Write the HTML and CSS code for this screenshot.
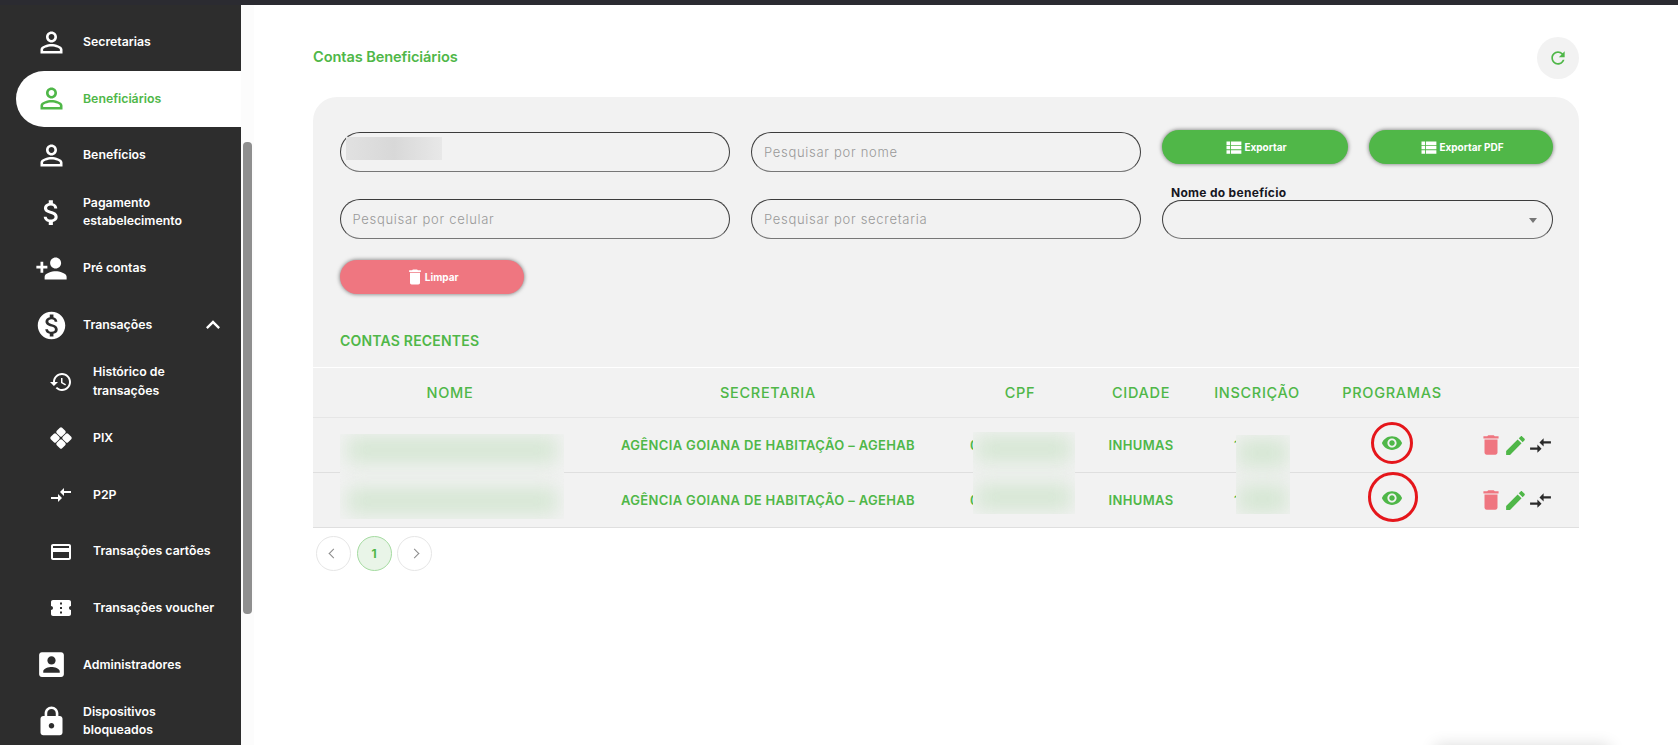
FILE: index.html
```html
<!DOCTYPE html>
<html lang="pt-BR">
<head>
<meta charset="utf-8">
<title>Contas Beneficiários</title>
<link rel="stylesheet" href="styles.css">
</head>
<body>
<svg class="defs" aria-hidden="true">
  <symbol id="i-person" viewBox="0 0 24 24"><path d="M12 5.9c1.16 0 2.1.94 2.1 2.1s-.94 2.1-2.1 2.1S9.9 9.16 9.9 8s.94-2.1 2.1-2.1m0 9c2.97 0 6.1 1.46 6.1 2.1v1.1H5.9V17c0-.64 3.13-2.1 6.1-2.1M12 4C9.79 4 8 5.79 8 8s1.79 4 4 4 4-1.79 4-4-1.79-4-4-4zm0 9c-2.67 0-8 1.34-8 4v3h16v-3c0-2.66-5.33-4-8-4z"/></symbol>
  <symbol id="i-money" viewBox="0 0 24 24"><path d="M11.8 10.9c-2.27-.59-3-1.2-3-2.15 0-1.09 1.01-1.85 2.7-1.85 1.78 0 2.44.85 2.5 2.1h2.21c-.07-1.72-1.12-3.3-3.21-3.81V3h-3v2.16c-1.94.42-3.5 1.68-3.5 3.61 0 2.31 1.91 3.46 4.7 4.13 2.5.6 3 1.48 3 2.41 0 .69-.49 1.79-2.7 1.79-2.06 0-2.87-.92-2.98-2.1h-2.2c.12 2.19 1.76 3.42 3.68 3.83V21h3v-2.15c1.95-.37 3.5-1.5 3.5-3.55 0-2.84-2.43-3.81-4.7-4.4z"/></symbol>
  <symbol id="i-add" viewBox="0 0 24 24"><path d="M15 12c2.21 0 4-1.79 4-4s-1.79-4-4-4-4 1.79-4 4 1.79 4 4 4zm-9-2V7H4v3H1v2h3v3h2v-3h3v-2H6zm9 4c-2.67 0-8 1.34-8 4v2h16v-2c0-2.66-5.33-4-8-4z"/></symbol>
  <symbol id="i-coin" viewBox="0 0 24 24"><path d="M12 2C6.48 2 2 6.48 2 12s4.48 10 10 10 10-4.48 10-10S17.52 2 12 2zm1.41 16.09V20h-2.67v-1.93c-1.71-.36-3.16-1.46-3.27-3.4h1.96c.1 1.05.82 1.87 2.65 1.87 1.96 0 2.4-.98 2.4-1.59 0-.83-.44-1.61-2.67-2.14-2.48-.6-4.18-1.62-4.18-3.67 0-1.72 1.39-2.84 3.11-3.21V4h2.67v1.95c1.86.45 2.79 1.86 2.85 3.39H14.3c-.05-1.11-.64-1.87-2.22-1.87-1.5 0-2.4.68-2.4 1.64 0 .84.65 1.39 2.67 1.91s4.18 1.39 4.18 3.91c-.01 1.83-1.38 2.83-3.12 3.16z"/></symbol>
  <symbol id="i-up" viewBox="0 0 24 24"><path d="M12 8l-6 6 1.41 1.41L12 10.83l4.59 4.58L18 14z"/></symbol>
  <symbol id="i-history" viewBox="0 0 24 24"><path d="M13 3c-4.97 0-9 4.03-9 9H1l3.89 3.89.07.14L9 12H6c0-3.87 3.13-7 7-7s7 3.13 7 7-3.13 7-7 7c-1.93 0-3.68-.79-4.94-2.06l-1.42 1.42C8.27 19.99 10.51 21 13 21c4.97 0 9-4.03 9-9s-4.03-9-9-9zm-1 5v5l4.28 2.54.72-1.21-3.5-2.08V8H12z"/></symbol>
  <symbol id="i-pix" viewBox="0 0 24 24"><rect x="8.2" y="2.2" width="7.6" height="7.6" rx="1.6" transform="rotate(45 12 6)"/><rect x="8.2" y="14.2" width="7.6" height="7.6" rx="1.6" transform="rotate(45 12 18)"/><rect x="2.2" y="8.2" width="7.6" height="7.6" rx="1.6" transform="rotate(45 6 12)"/><rect x="14.2" y="8.2" width="7.6" height="7.6" rx="1.6" transform="rotate(45 18 12)"/></symbol>
  <symbol id="i-swap" viewBox="0 0 24 24"><path d="M9.01 14H2v2h7.01v3L13 15l-3.99-4v3zm5.98-1v-3H22V8h-7.01V5L11 9l3.99 4z"/></symbol>
  <symbol id="i-card" viewBox="0 0 24 24"><path d="M20 4H4c-1.11 0-1.99.89-1.99 2L2 18c0 1.11.89 2 2 2h16c1.11 0 2-.89 2-2V6c0-1.11-.89-2-2-2zm0 14H4v-6h16v6zm0-10H4V6h16v2z"/></symbol>
  <symbol id="i-ticket" viewBox="0 0 24 24"><path d="M22 10V6c0-1.11-.9-2-2-2H4c-1.1 0-1.99.89-1.99 2v4c1.1 0 1.99.9 1.99 2s-.89 2-2 2v4c0 1.1.9 2 2 2h16c1.1 0 2-.9 2-2v-4c-1.1 0-2-.9-2-2s.9-2 2-2zm-9 7.5h-2v-2h2v2zm0-4.5h-2v-2h2v2zm0-4.5h-2v-2h2v2z"/></symbol>
  <symbol id="i-account" viewBox="0 0 24 24"><path d="M3 5v14c0 1.1.89 2 2 2h14c1.1 0 2-.9 2-2V5c0-1.1-.9-2-2-2H5c-1.11 0-2 .9-2 2zm12 4c0 1.66-1.34 3-3 3s-3-1.34-3-3 1.34-3 3-3 3 1.34 3 3zm-9 8c0-2 4-3.1 6-3.1s6 1.1 6 3.1v1H6v-1z"/></symbol>
  <symbol id="i-lock" viewBox="0 0 24 24"><path d="M18 8h-1V6c0-2.76-2.24-5-5-5S7 3.24 7 6v2H6c-1.1 0-2 .9-2 2v10c0 1.1.9 2 2 2h12c1.1 0 2-.9 2-2V10c0-1.1-.9-2-2-2zm-6 9c-1.1 0-2-.9-2-2s.9-2 2-2 2 .9 2 2-.9 2-2 2zm3.1-9H8.9V6c0-1.71 1.39-3.1 3.1-3.1 1.71 0 3.1 1.39 3.1 3.1v2z"/></symbol>
  <symbol id="i-delete" viewBox="0 0 24 24"><path d="M6 19c0 1.1.9 2 2 2h8c1.1 0 2-.9 2-2V7H6v12zM19 4h-3.5l-1-1h-5l-1 1H5v2h14V4z"/></symbol>
  <symbol id="i-edit" viewBox="0 0 24 24"><path d="M3 17.25V21h3.75L17.81 9.94l-3.75-3.75L3 17.25zM20.71 7.04c.39-.39.39-1.02 0-1.41l-2.34-2.34c-.39-.39-1.02-.39-1.41 0l-1.83 1.83 3.75 3.75 1.83-1.83z"/></symbol>
  <symbol id="i-eye" viewBox="0 0 24 24"><path d="M12 4.5C7 4.5 2.73 7.61 1 12c1.73 4.39 6 7.5 11 7.5s9.27-3.11 11-7.5c-1.73-4.39-6-7.5-11-7.5zM12 17c-2.76 0-5-2.24-5-5s2.24-5 5-5 5 2.24 5 5-2.24 5-5 5zm0-8c-1.66 0-3 1.34-3 3s1.34 3 3 3 3-1.34 3-3-1.34-3-3-3z"/></symbol>
  <symbol id="i-list" viewBox="0 0 24 24"><path d="M4 14h4v-4H4v4zm0 5h4v-4H4v4zM4 9h4V5H4v4zm5 5h12v-4H9v4zm0 5h12v-4H9v4zM9 5v4h12V5H9z"/></symbol>
  <symbol id="i-refresh" viewBox="0 0 24 24"><path d="M17.65 6.35C16.2 4.9 14.21 4 12 4c-4.42 0-7.99 3.58-7.99 8s3.57 8 7.99 8c3.73 0 6.84-2.55 7.73-6h-2.08c-.82 2.33-3.04 4-5.65 4-3.31 0-6-2.69-6-6s2.69-6 6-6c1.66 0 3.14.69 4.22 1.78L13 11h7V4l-2.35 2.35z"/></symbol>
</svg>

<div class="topbar"></div>
<div class="shell">
  <aside class="side">
    <nav class="nav">
      <a class="item"><svg class="ico"><use href="#i-person"/></svg><span>Secretarias</span></a>
      <a class="item active"><svg class="ico"><use href="#i-person"/></svg><span>Beneficiários</span></a>
      <a class="item"><svg class="ico"><use href="#i-person"/></svg><span>Benefícios</span></a>
      <a class="item"><svg class="ico"><use href="#i-money"/></svg><span>Pagamento<br>estabelecimento</span></a>
      <a class="item"><svg class="ico"><use href="#i-add"/></svg><span>Pré contas</span></a>
      <a class="item"><svg class="ico coin"><use href="#i-coin"/></svg><span>Transações</span><svg class="chev"><use href="#i-up"/></svg></a>
      <a class="item sub"><svg class="ico"><use href="#i-history"/></svg><span>Histórico de<br>transações</span></a>
      <a class="item sub"><svg class="ico"><use href="#i-pix"/></svg><span>PIX</span></a>
      <a class="item sub"><svg class="ico"><use href="#i-swap"/></svg><span>P2P</span></a>
      <a class="item sub"><svg class="ico"><use href="#i-card"/></svg><span>Transações cartões</span></a>
      <a class="item sub"><svg class="ico"><use href="#i-ticket"/></svg><span>Transações voucher</span></a>
      <a class="item"><svg class="ico"><use href="#i-account"/></svg><span>Administradores</span></a>
      <a class="item"><svg class="ico"><use href="#i-lock"/></svg><span>Dispositivos<br>bloqueados</span></a>
    </nav>
    <div class="track"><div class="thumb"></div></div>
  </aside>

  <main class="main">
    <header class="head">
      <h1 class="title">Contas Beneficiários</h1>
      <button class="refresh" type="button" aria-label="Atualizar"><svg class="refresh-ico"><use href="#i-refresh"/></svg></button>
    </header>

    <section class="card">
      <form class="filters">
        <div class="field cell-input"><input class="input" type="text" aria-label="Pesquisar por CPF"><span class="smudge"></span></div>
        <div class="field cell-input"><input class="input" type="text" placeholder="Pesquisar por nome"></div>
        <button class="btn green" type="button"><svg class="btn-ico"><use href="#i-list"/></svg>Exportar</button>
        <button class="btn green" type="button"><svg class="btn-ico"><use href="#i-list"/></svg>Exportar PDF</button>
        <div class="field cell-input low"><input class="input" type="text" placeholder="Pesquisar por celular"></div>
        <div class="field cell-input low"><input class="input" type="text" placeholder="Pesquisar por secretaria"></div>
        <div class="select-wrap">
          <label class="select-label">Nome do benefício</label>
          <div class="select"><i class="caret"></i></div>
        </div>
        <button class="btn red" type="button"><svg class="btn-ico trash"><use href="#i-delete"/></svg>Limpar</button>
      </form>

      <h2 class="recent">CONTAS RECENTES</h2>

      <table class="table">
        <colgroup>
          <col class="c1"><col class="c2"><col class="c3"><col class="c4"><col class="c5"><col class="c6"><col class="c7">
        </colgroup>
        <thead>
          <tr><th>NOME</th><th>SECRETARIA</th><th>CPF</th><th>CIDADE</th><th>INSCRIÇÃO</th><th>PROGRAMAS</th><th></th></tr>
        </thead>
        <tbody>
          <tr>
            <td></td><td>AGÊNCIA GOIANA DE HABITAÇÃO – AGEHAB</td><td class="cpf">000.000.000</td><td>INHUMAS</td><td class="insc">1000</td>
            <td><svg class="eye"><use href="#i-eye"/></svg></td>
            <td class="acts"><svg class="act del"><use href="#i-delete"/></svg><svg class="act pen"><use href="#i-edit"/></svg><svg class="act swap"><use href="#i-swap"/></svg></td>
          </tr>
          <tr>
            <td></td><td>AGÊNCIA GOIANA DE HABITAÇÃO – AGEHAB</td><td class="cpf">000.000.000</td><td>INHUMAS</td><td class="insc">1000</td>
            <td><svg class="eye"><use href="#i-eye"/></svg></td>
            <td class="acts"><svg class="act del"><use href="#i-delete"/></svg><svg class="act pen"><use href="#i-edit"/></svg><svg class="act swap"><use href="#i-swap"/></svg></td>
          </tr>
        </tbody>
      </table>

      <div class="patch p-nome"><i class="blob b1"></i><i class="blob b2"></i></div>
      <div class="patch p-cpf"><i class="blob b1"></i><i class="blob b2"></i></div>
      <div class="patch p-insc"><i class="blob b1"></i><i class="blob b2"></i></div>
      <span class="ring r1"></span>
      <span class="ring r2"></span>
    </section>

    <nav class="pager">
      <a class="page"><span class="arrow left"></span></a>
      <a class="page current">1</a>
      <a class="page"><span class="arrow right"></span></a>
    </nav>
  </main>
</div>
<div class="corner-shadow"></div>
</body>
</html>
```

FILE: styles.css
```css
* { box-sizing: border-box; }
html, body { margin: 0; height: 745px; overflow: hidden; background: #fff; }
body { font-family: Inter, "Open Sans", sans-serif; color: #4fb748; position: relative; }
.defs { position: absolute; width: 0; height: 0; }

.topbar { height: 5px; background: #2b2b31; }
.shell { display: flex; height: 740px; }

/* sidebar */
.side { display: flex; flex: 0 0 254px; height: 100%; }
.nav { width: 241px; background: #2d2d2d; padding-top: 9px; overflow: hidden; }
.track { width: 13px; background: #fcfcfc; }
.thumb { width: 9px; height: 472px; margin: 137px 0 0 2px; background: #8f8f8f; border-radius: 4px; }

.item { display: flex; align-items: center; height: 56.6px; padding-left: 35px; color: #fff; font-size: 12.3px; font-weight: 600; line-height: 18.5px; fill: #fff; }
.item .ico { flex: 0 0 33px; width: 33px; height: 33px; margin-right: 15px; fill: inherit; }
.item.active { margin-left: 16px; padding-left: 19px; background: #fff; border-radius: 28px 0 0 28px; color: #4fb748; fill: #4fb748; }
.item.sub { padding-left: 49px; }
.item.sub .ico { flex-basis: 24px; width: 24px; height: 24px; margin-right: 20px; }
.chev { width: 28px; height: 28px; margin-left: auto; margin-right: 14px; fill: #fff; }

/* main */
.main { flex: 1; padding: 0 99px 0 59px; }
.head { display: flex; justify-content: space-between; align-items: center; height: 92px; padding-top: 14px; }
.title { margin: 0; padding-bottom: 2px; font-size: 14.6px; font-weight: 600; color: #4fb748; letter-spacing: -.1px; }
.refresh { width: 42px; height: 42px; border: 0; border-radius: 50%; background: #f2f2f2; display: flex; align-items: center; justify-content: center; padding: 0; }
.refresh-ico { width: 20px; height: 20px; fill: #4fb748; }

.card { position: relative; height: 431px; padding-top: 33px; background: #f2f2f2; border-radius: 24px 24px 0 0; }

.filters { display: grid; grid-template-columns: 390.5px 390px 186px 184px; column-gap: 21px; grid-template-rows: 42px 60px 34px; row-gap: 14px; margin-left: 26.5px; align-items: start; }
.field { position: relative; }
.cell-input { padding-top: 2px; }
.cell-input.low { padding-top: 13px; }
.input { width: 100%; height: 39.5px; padding: 0 12px; background: transparent; border: 1px solid #3c3c3c; border-bottom-color: #777; border-radius: 20px; font: 300 13px Inter, sans-serif; color: #333; letter-spacing: .7px; outline: none; }
.input::placeholder { color: #999; opacity: 1; }
.smudge { position: absolute; left: 6px; top: 7px; width: 96px; height: 23px; background: linear-gradient(90deg, #e1e1e1, #d8d8d8 50%, #e8e8e8); }

.btn { display: flex; align-items: center; justify-content: center; gap: 0; height: 34px; width: 100%; padding: 0; border: 0; border-radius: 17px; color: #fff; font: 700 10px Inter, sans-serif; box-shadow: 0 0 4px rgba(0, 0, 0, .55); }
.btn.green { background: #50b748; }
.btn.red { background: #ef7680; width: 184.5px; grid-column: 1; }
.btn-ico { width: 21px; height: 21px; fill: #fff; }
.btn-ico.trash { width: 20px; height: 20px; }

.select-wrap { grid-column: 3 / 5; display: flex; flex-direction: column; }
.select-label { height: 14px; padding-left: 9px; font-size: 12px; font-weight: 700; line-height: 13px; color: #17171f; letter-spacing: .3px; }
.select { position: relative; height: 39px; border: 1px solid #3c3c3c; border-bottom-color: #777; border-radius: 20px; }
.caret { position: absolute; right: 15px; top: 17px; border: 4px solid transparent; border-top: 5px solid #767676; border-bottom: 0; }

.recent { margin: 38px 0 17px 27px; height: 18px; font-size: 14px; font-weight: 600; line-height: 18px; color: #4fb748; letter-spacing: .2px; }

.table { width: 1266px; table-layout: fixed; border-collapse: collapse; border-top: 1px solid #fff; text-align: center; }
.c1 { width: 274px; } .c2 { width: 362px; } .c3 { width: 142px; } .c4 { width: 100px; }
.c5 { width: 132px; } .c6 { width: 138px; } .c7 { width: 118px; }
.table th { height: 50px; font-size: 14.5px; font-weight: 500; letter-spacing: .7px; color: #4fb748; border-bottom: 1px solid #e6e6e6; padding: 0; white-space: nowrap; }
.table td { height: 55px; font-size: 13px; font-weight: 600; letter-spacing: .35px; color: #4fb748; border-bottom: 1px solid #dfdfdf; padding: 0; white-space: nowrap; }
.table td.cpf { text-align: left; padding-left: 21px; }
.table td.insc { text-align: left; padding-left: 43px; }
.eye { display: block; width: 22px; height: 22px; margin: 0 auto 5px; fill: #4fb748; }
.table td.acts { padding-left: 17px; text-align: left; font-size: 0; }
.act { height: 25px; vertical-align: middle; }
.del { fill: #ef7680; width: 26px; height: 26px; }
.pen { fill: #4fb748; width: 25px; margin-left: -1px; }
.swap { fill: #2a2a2a; width: 25px; }

/* masked data laid over the table rows */
.patch { position: absolute; overflow: hidden; background: #f2f2f2; }
.blob { position: absolute; left: 3%; right: 3%; background: #d4e6d2; filter: blur(10px); }
.p-nome { left: 27px; top: 337px; width: 224px; height: 85px; }
.p-nome .b1 { top: 3px; height: 26px; }
.p-nome .b2 { top: 54px; height: 26px; }
.p-cpf { left: 660px; top: 335px; width: 102px; height: 82px; }
.p-cpf .b1 { top: 4px; height: 26px; }
.p-cpf .b2 { top: 52px; height: 26px; }
.p-insc { left: 922.5px; top: 338px; width: 54px; height: 79px; }
.p-insc .b1 { top: 4px; height: 28px; }
.p-insc .b2 { top: 50px; height: 28px; }

/* red annotation circles */
.ring { position: absolute; border: 3px solid #e5161b; border-radius: 50%; }
.r1 { left: 1058px; top: 325px; width: 42px; height: 42px; }
.r2 { left: 1055px; top: 375px; width: 50px; height: 50px; }

/* pagination */
.pager { display: flex; gap: 5.5px; margin: 8px 0 0 3px; }
.page { display: flex; align-items: center; justify-content: center; width: 35px; height: 35px; border: 1px solid #e6e6e6; border-radius: 50%; font-size: 12px; font-weight: 700; color: #4fb748; background: #fff; }
.page.current { background: #e9f5e8; border-color: #a5dba1; }
.arrow { width: 7px; height: 7px; border-left: 1px solid #8a8a8a; border-bottom: 1px solid #8a8a8a; transform: rotate(45deg); }
.arrow.right { transform: rotate(225deg); }

/* element just below the fold, only its shadow shows */
.corner-shadow { position: absolute; left: 1435px; top: 745px; width: 175px; height: 30px; box-shadow: 0 0 16px rgba(0, 0, 0, .14); }
```
